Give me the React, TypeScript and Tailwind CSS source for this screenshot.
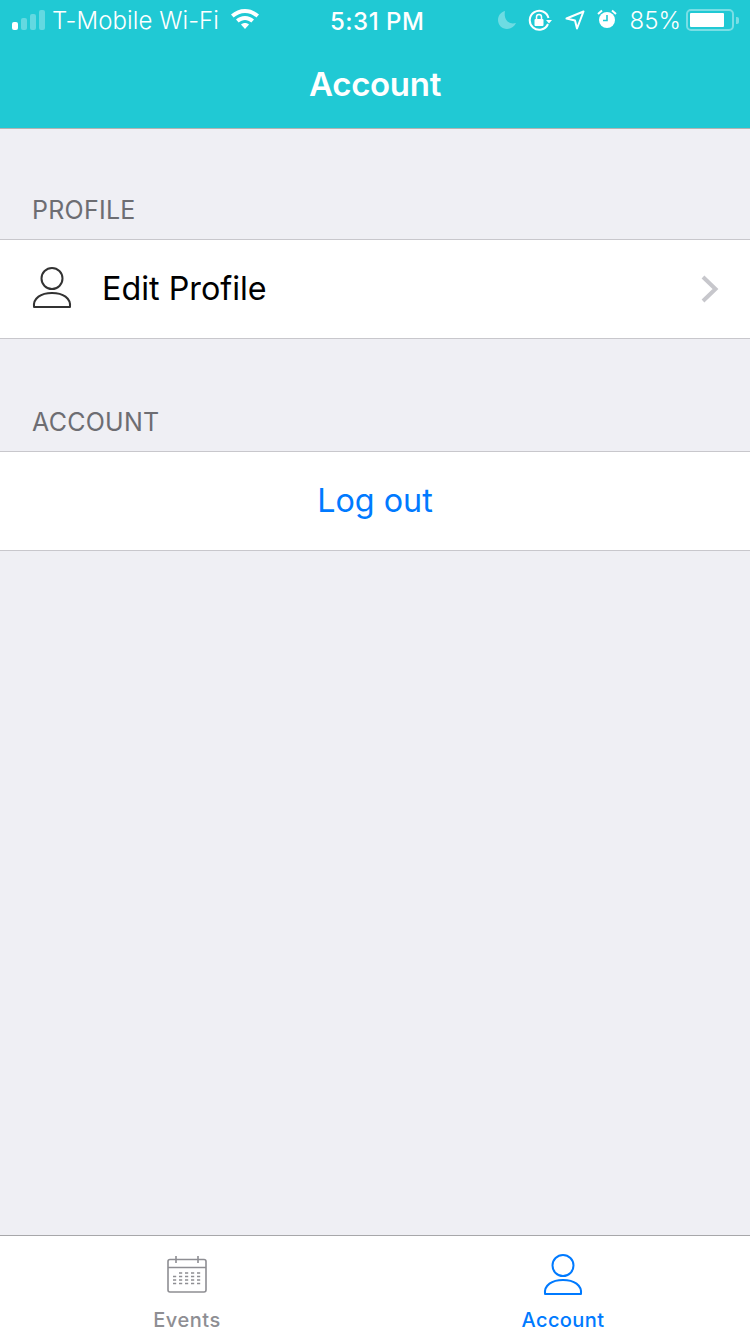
const font = { fontFamily: 'Inter, "Noto Sans", sans-serif' };

function Person({ color, className }: { color: string; className: string }) {
  return (
    <svg viewBox="0 0 40 41" className={className} fill="none" stroke={color} strokeWidth="2">
      <circle cx="20" cy="11.500" r="10.500" />
      <path d="M2 40 C1 31 9 26 20 26 C31 26 39 31 38 40 Z" strokeLinejoin="round" />
    </svg>
  );
}

function Section({ title, children }: { title: string; children: React.ReactNode }) {
  return (
    <section>
      <div className="h-[110px] flex items-end pb-[14px] pl-[32px] text-[25px] leading-[30px] text-[#6d6d72] tracking-[0.25px]">
        {title}
      </div>
      <div className="h-[100px] bg-white border-y border-[#c8c7cc] flex items-center">{children}</div>
    </section>
  );
}

function Calendar() {
  return (
    <svg viewBox="0 0 40 37" className="w-[40px] h-[37px]" fill="none" stroke="#8e8e93" strokeWidth="1.6">
      <rect x="1" y="3.500" width="38" height="32.500" rx="2" />
      <path d="M1 11.500 H39" />
      <path d="M9 0 V7 M31 0 V7" />
      <path
        d="M12 17H35 M6 20.500H35 M6 24H35 M6 27.500H35"
        strokeDasharray="3.200 2.800"
        strokeWidth="1.500"
      />
    </svg>
  );
}

export default function App() {
  return (
    <div style={font} className="w-[750px] h-[1334px] bg-[#efeff4] flex flex-col overflow-hidden">
      <header className="h-[129px] shrink-0 bg-[#20c9d4] border-b border-[#b3b3b3] text-white">
        <div className="h-[40px] flex items-center justify-between relative pl-[12px] pr-[11px]">
          <div className="flex items-center">
            <div className="flex items-end gap-[3px] h-[20px]">
              <span className="w-[6px] h-[8px] rounded-[2px] bg-white" />
              <span className="w-[6px] h-[12px] rounded-[2px] bg-white/30" />
              <span className="w-[6px] h-[16px] rounded-[2px] bg-white/30" />
              <span className="w-[6px] h-[20px] rounded-[2px] bg-white/30" />
            </div>
            <span className="ml-[7px] mt-[2px] text-[24px] font-light leading-none tracking-[0.08px]">T-Mobile Wi-Fi</span>
            <svg viewBox="0 0 28 20" className="w-[28px] h-[20px] ml-[12px] mb-[2px]" fill="white">
              <path d="M14 0 C8.800 0 4 2 0 5.600 L2.600 8.600 C5.800 5.700 9.800 4 14 4 C18.200 4 22.200 5.700 25.400 8.600 L28 5.600 C24 2 19.200 0 14 0 Z" />
              <path d="M14 7 C10.600 7 7.500 8.200 5 10.600 L7.700 13.500 C9.500 11.900 11.700 11 14 11 C16.300 11 18.500 11.900 20.300 13.500 L23 10.600 C20.500 8.200 17.400 7 14 7 Z" />
              <path d="M14 14 C12.500 14 11.200 14.500 10 15.500 L14 20 L18 15.500 C16.800 14.500 15.500 14 14 14 Z" />
            </svg>
          </div>
          <span className="absolute left-[330px] top-[8px] text-[24px] leading-[28px] font-medium tracking-[0.5px]">5:31 PM</span>
          <div className="flex items-center">
            <svg viewBox="0 0 20 20" className="w-[20px] h-[20px]" fill="white" fillOpacity="0.35">
              <path d="M8 1 C3.800 2 1 5.600 1 10 C1 15 5 19 10 19 C14 19 17.400 16.600 19 13 C13 15 6.200 11 8 1 Z" />
            </svg>
            <svg viewBox="0 0 24 22" className="w-[24px] h-[22px] ml-[11px]" fill="none" stroke="white" strokeWidth="2">
              <path d="M20 15 A9.500 9.500 0 1 1 20.500 9" />
              <path d="M18 11 H24 L21 14.500 Z" fill="white" stroke="none" />
              <rect x="6.500" y="10" width="9" height="7" rx="1" fill="white" stroke="none" />
              <path d="M8.500 10 V8 A2.500 2.500 0 0 1 13.500 8 V10" strokeWidth="1.500" />
            </svg>
            <svg viewBox="0 0 20 20" className="w-[20px] h-[20px] ml-[13px]" fill="none" stroke="white" strokeWidth="2">
              <path d="M18.500 1.500 L1.500 8.500 L10 10.500 L12 18.500 Z" strokeLinejoin="round" />
            </svg>
            <svg viewBox="0 0 20 20" className="w-[20px] h-[20px] ml-[12px] -mt-[2px]">
              <circle cx="10" cy="11" r="8" fill="white" />
              <path d="M10 6 V11.500 H6" fill="none" stroke="#20c9d4" strokeWidth="1.600" />
              <path d="M1 5 L5 1.500 M19 5 L15 1.500" stroke="white" strokeWidth="2" />
            </svg>
            <span className="ml-[13px] mt-[2px] text-[24px] font-light leading-none">85%</span>
            <div className="ml-[5px] w-[48px] h-[22px] rounded-[5px] border-2 border-white/40 p-[2px] flex">
              <div className="w-[34px] bg-white rounded-[1px]" />
            </div>
            <span className="ml-[2px] w-[3px] h-[7px] rounded-r-[2px] bg-white/40" />
          </div>
        </div>
        <div className="h-[88px] pt-[2px] flex items-center justify-center text-[33px] font-semibold tracking-[-0.3px]">
          Account
        </div>
      </header>

      <main className="flex-1">
        <Section title="PROFILE">
          <Person color="#333333" className="ml-[32px] -mt-[4px] w-[40px] h-[41px]" />
          <span className="ml-[30px] text-[32.300px] text-black">Edit Profile</span>
          <svg viewBox="0 0 18 28" className="ml-auto mr-[31px] w-[18px] h-[28px]" fill="none" stroke="#c7c7cc" strokeWidth="4">
            <path d="M2 2 L14.500 14 L2 26" />
          </svg>
        </Section>
        <div className="mt-[2px]">
          <Section title="ACCOUNT">
            <span className="w-full text-center text-[32.300px] text-[#007aff]">Log out</span>
          </Section>
        </div>
      </main>

      <nav className="h-[99px] shrink-0 bg-white border-t border-[#a7a7aa] flex">
        <div className="w-[374px] flex flex-col items-center pt-[20px] text-[#8e8e93]">
          <Calendar />
          <span className="mt-[15px] text-[20px] leading-[24px] font-medium tracking-[0.5px]">Events</span>
        </div>
        <div className="flex-1 pl-[2px] flex flex-col items-center pt-[18px] text-[#007aff]">
          <Person color="#007aff" className="w-[40px] h-[41px]" />
          <span className="mt-[13px] text-[20px] leading-[24px] font-medium tracking-[0.4px]">Account</span>
        </div>
      </nav>
    </div>
  );
}
